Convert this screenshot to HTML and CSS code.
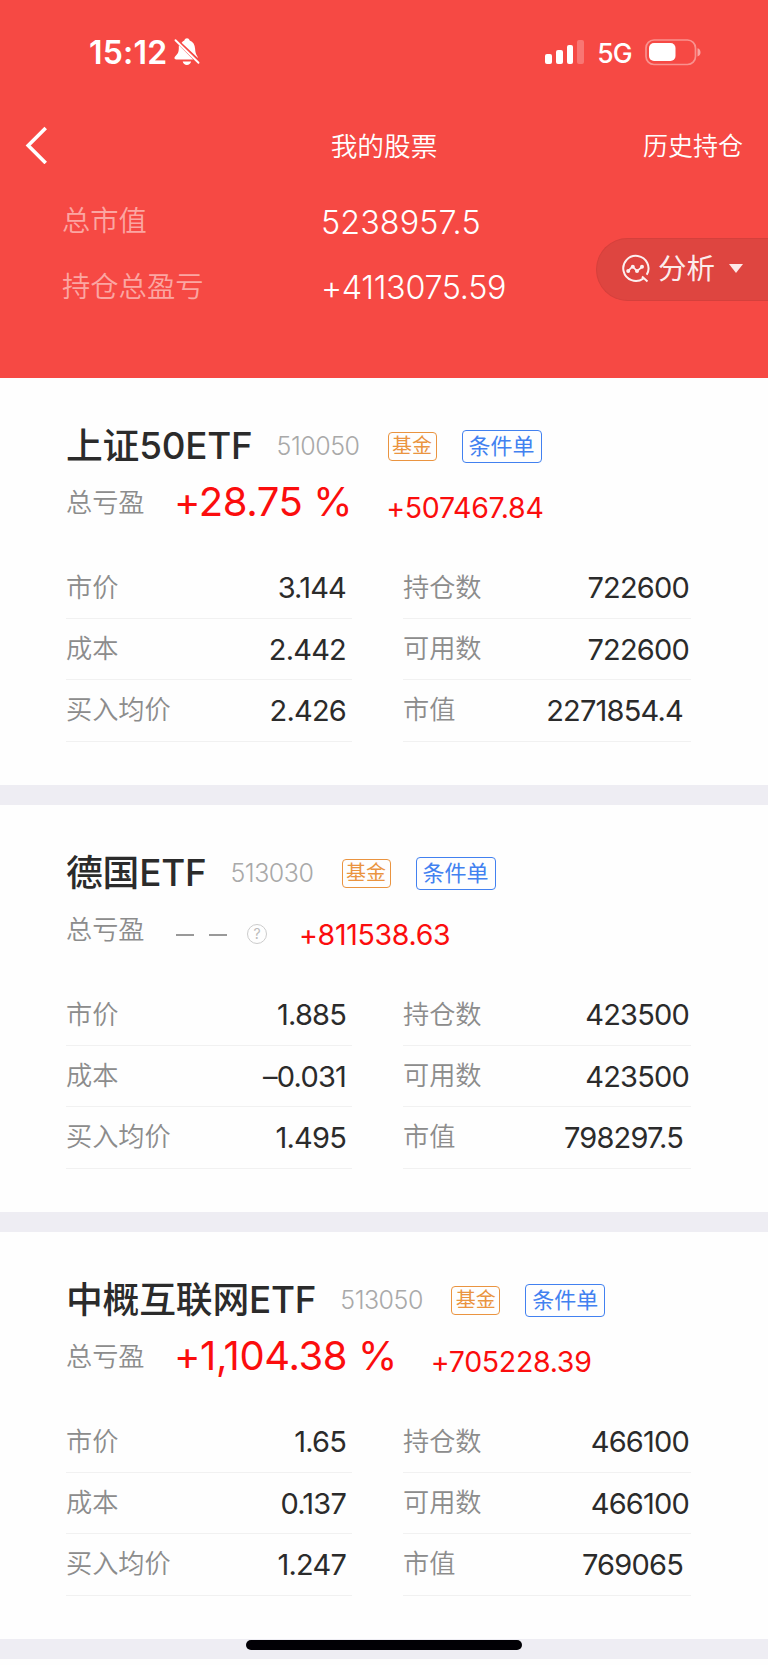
FILE: index.html
```html
<!doctype html>
<html lang="zh-CN">

<head>
    <meta charset="utf-8" />
    <meta name="viewport" content="width=device-width, initial-scale=1.0, viewport-fit=cover">
    <title>我的股票</title>
    <link rel="stylesheet" href="styles.css">
</head>

<body>

    <div class="main">

        <div class="header">
            <div class="status">
                <div class="time">15:12</div>
                <svg class="bell" width="26" height="28" viewBox="0 0 26 28">
                    <path fill="#fff" d="M7.600 4.800C8.600 3.700 9.400 3 10.300 2.600C10.800 1 11.800 .3 13 .3s2.200.7 2.700 2.300c3.400 1.300 5.200 4.200 5.400 8.200c.1 3.400.8 5.400 2.300 7.600c.3.500.5 1 .5 1.500L7.600 4.800zM4.900 7.200L19.200 21.500H2.200c-1.800 0-2.300-1.600-1.100-2.900c2.800-2.900 3.600-4.300 3.700-7.800c0-1.200 0-2.500.1-3.600zM8.700 23.500h8.400c-.5 2-2.200 3.500-4.200 3.500s-3.700-1.500-4.200-3.500z" />
                    <path stroke="#fff" stroke-width="1.900" stroke-linecap="round" d="M1.500 2.200L24.500 24.800" />
                </svg>
                <div class="signal"><i></i><i></i><i></i><i class="off"></i></div>
                <div class="network">5G</div>
                <svg class="battery" width="57" height="27" viewBox="0 0 57 27">
                    <rect x="1" y="1" width="49.500" height="24.500" rx="8" fill="none" stroke="#fff" stroke-opacity=".4" stroke-width="1.700" />
                    <rect x="4" y="4" width="26.500" height="18" rx="5" fill="#fff" />
                    <path fill="#fff" fill-opacity=".5" d="M52.500 9.200c4 1 4 7.200 0 8.200z" />
                </svg>
            </div>

            <div class="nav">
                <svg class="back" width="24" height="38" viewBox="0 0 24 38">
                    <path fill="none" stroke="#fff" stroke-width="3.600" d="M20.700 2L3.200 19.500L20.700 37" />
                </svg>
                <div class="title">我的股票</div>
                <div class="history">历史持仓</div>
            </div>

            <div class="summary">
                <div class="line"><span class="label">总市值</span><span class="value">5238957.5</span></div>
                <div class="line"><span class="label">持仓总盈亏</span><span class="value signed">+4113075.59</span></div>
            </div>

            <div class="analyze">
                <svg width="30" height="30" viewBox="0 0 30 30" fill="none" stroke="#fff" opacity=".92">
                    <path stroke-width="2" d="M22.200 24.600A12.600 12.600 0 1 1 25.700 20.800M21 22.500L26.500 27.500" />
                    <path stroke-width="1.700" d="M7 17.200L11.500 12.500L16 17.200L21.500 12.500" />
                    <g fill="#fff" stroke="none">
                        <circle cx="7.200" cy="17" r="2" />
                        <circle cx="11.800" cy="12.800" r="2" />
                        <circle cx="16" cy="17" r="2" />
                        <circle cx="21" cy="12.800" r="2" />
                    </g>
                </svg>
                <span class="text">分析</span>
                <span class="arrow"></span>
            </div>
        </div>

        <div class="stock">
            <div class="name">
                <span class="cn">上证50ETF</span>
                <span class="code">510050</span>
                <span class="tag fund">基金</span>
                <span class="tag order">条件单</span>
            </div>
            <div class="profit">
                <span class="label">总亏盈</span>
                <span class="percent">+28.75 %</span>
                <span class="amount">+507467.84</span>
            </div>
            <div class="grid">
                <div class="row"><span>市价</span><b>3.144</b></div>
                <div class="row"><span>持仓数</span><b>722600</b></div>
                <div class="row"><span>成本</span><b>2.442</b></div>
                <div class="row"><span>可用数</span><b>722600</b></div>
                <div class="row"><span>买入均价</span><b>2.426</b></div>
                <div class="row total"><span>市值</span><b>2271854.4</b></div>
            </div>
        </div>

        <div class="stock">
            <div class="name">
                <span class="cn">德国ETF</span>
                <span class="code">513030</span>
                <span class="tag fund">基金</span>
                <span class="tag order">条件单</span>
            </div>
            <div class="profit">
                <span class="label">总亏盈</span>
                <span class="empty"><i></i><i></i></span>
                <span class="help">?</span>
                <span class="amount">+811538.63</span>
            </div>
            <div class="grid">
                <div class="row"><span>市价</span><b>1.885</b></div>
                <div class="row"><span>持仓数</span><b>423500</b></div>
                <div class="row"><span>成本</span><b>–0.031</b></div>
                <div class="row"><span>可用数</span><b>423500</b></div>
                <div class="row"><span>买入均价</span><b>1.495</b></div>
                <div class="row total"><span>市值</span><b>798297.5</b></div>
            </div>
        </div>

        <div class="stock">
            <div class="name">
                <span class="cn">中概互联网ETF</span>
                <span class="code">513050</span>
                <span class="tag fund">基金</span>
                <span class="tag order">条件单</span>
            </div>
            <div class="profit">
                <span class="label">总亏盈</span>
                <span class="percent">+1,104.38 %</span>
                <span class="amount">+705228.39</span>
            </div>
            <div class="grid">
                <div class="row"><span>市价</span><b>1.65</b></div>
                <div class="row"><span>持仓数</span><b>466100</b></div>
                <div class="row"><span>成本</span><b>0.137</b></div>
                <div class="row"><span>可用数</span><b>466100</b></div>
                <div class="row"><span>买入均价</span><b>1.247</b></div>
                <div class="row total"><span>市值</span><b>769065</b></div>
            </div>
        </div>

        <div class="home-bar"></div>

    </div>

</body>

</html>
```
FILE: styles.css
```css
html,
body {
    margin: 0;
    height: 100%;
    font-family: Inter, "Noto Sans CJK SC", sans-serif;
    background-color: white;
}

.main {
    position: relative;
    height: 1665px;
    overflow: hidden;
    background-color: #fefefe;
}

.main .header {
    position: relative;
    box-sizing: border-box;
    height: 377.500px;
    padding-top: 30px;
    background-color: #f64944;
    color: white;
}

.main .header .status {
    display: flex;
    align-items: center;
    height: 44px;
    padding-left: 89px;
}

.main .header .status .time {
    width: 85px;
    padding-top: 2px;
    font-size: 32px;
    font-weight: 600;
    letter-spacing: 0.2px;
    line-height: 44px;
}

.main .header .status .signal {
    display: flex;
    align-items: flex-end;
    gap: 4px;
    height: 24px;
    margin-left: 345px;
}

.main .header .status .signal i {
    width: 6.800px;
    height: 10px;
    border-radius: 2px;
    background-color: white;
}

.main .header .status .signal i:nth-child(2) {
    height: 14px;
}

.main .header .status .signal i:nth-child(3) {
    height: 19px;
}

.main .header .status .signal i.off {
    height: 24px;
    opacity: 0.25;
}

.main .header .status .network {
    width: 48px;
    margin-left: 13px;
    font-size: 26.500px;
    font-weight: 500;
    letter-spacing: -0.8px;
    padding-top: 2px;
}

.main .header .nav {
    display: grid;
    grid-template-columns: 1fr auto 1fr;
    align-items: center;
    height: 44px;
    margin-top: 49px;
    padding: 0 25px;
    font-weight: 350;
}

.main .header .nav .title {
    margin-top: -2px;
    font-size: 26.700px;
}

.main .header .nav .history {
    margin-top: -2px;
    font-size: 25px;
    text-align: right;
}

.main .header .summary {
    margin-top: 21px;
    padding-left: 62px;
}

.main .header .summary .line {
    display: flex;
    align-items: center;
    height: 65.500px;
}

.main .header .summary .label {
    width: 259px;
    margin-top: -4px;
    font-size: 28.300px;
    font-weight: 350;
    color: #fba6a2;
}

.main .header .summary .value {
    font-size: 32.300px;
    font-weight: 350;
    letter-spacing: 0.1px;
    padding-top: 3px;
}

.main .header .summary .value.signed {
    letter-spacing: -0.300px;
}

/* pill stuck to the right edge, over the header */
.main .header .analyze {
    position: absolute;
    top: 238px;
    right: 0;
    display: flex;
    align-items: center;
    box-sizing: border-box;
    width: 172px;
    height: 62.500px;
    padding-left: 24px;
    border: 1px solid #d5403c;
    border-right: none;
    border-radius: 32px 0 0 32px;
    background-color: #de4540;
}

.main .header .analyze .text {
    margin-left: 7px;
    font-size: 28.500px;
    line-height: 60px;
    opacity: 0.9;
}

.main .header .analyze .arrow {
    margin-left: 14px;
    margin-top: -1px;
    border: 7px solid transparent;
    border-top: 9.500px solid #fde9e8;
    border-bottom: none;
}

.main .stock {
    box-sizing: border-box;
    height: 427px;
    padding: 44px 78px 0 66px;
    border-bottom: 20.500px solid #eeedf3;
}

.main .stock .name {
    display: flex;
    align-items: center;
    height: 48px;
}

.main .stock .name .cn {
    font-size: 36.800px;
    font-weight: 500;
    letter-spacing: -0.2px;
    line-height: 48px;
    color: #2b2b2b;
}

.main .stock .name .code {
    width: 85px;
    margin-left: 24px;
    font-size: 25px;
    font-weight: 300;
    letter-spacing: -0.5px;
    padding-top: 1px;
    color: #a9a9a9;
}

.main .stock .name .tag {
    box-sizing: border-box;
    margin-top: 1px;
    text-align: center;
    border: 1px solid;
    border-radius: 4px;
}

.main .stock .name .fund {
    width: 49px;
    height: 29px;
    margin-left: 26px;
    font-size: 20px;
    line-height: 27px;
    color: #ea9440;
}

.main .stock .name .order {
    width: 80px;
    height: 33px;
    margin-left: 25px;
    font-size: 22px;
    line-height: 30px;
    color: #4281f0;
}

.main .stock .profit {
    display: flex;
    align-items: center;
    height: 66px;
    line-height: 66px;
}

.main .stock .profit .label {
    width: 108px;
    font-size: 26.200px;
    font-weight: 350;
    color: #8c8c8c;
}

.main .stock .profit .percent {
    margin-top: -1px;
    margin-right: 34px;
    font-size: 40px;
    font-weight: 380;
    letter-spacing: -0.4px;
    color: #fb0d0d;
}

.main .stock .profit .amount {
    margin-top: 10px;
    font-size: 28.500px;
    font-weight: 380;
    letter-spacing: -0.3px;
    color: #fb0d0d;
}

.main .stock .profit .empty {
    display: flex;
    gap: 15px;
    margin-top: 10px;
    margin-left: 2px;
}

.main .stock .profit .empty i {
    width: 18px;
    height: 2px;
    background-color: #999;
}

.main .stock .profit .help {
    box-sizing: border-box;
    width: 20px;
    height: 20px;
    margin: 9px 32px 0 20px;
    border: 1px solid #ccc;
    border-radius: 50%;
    font-size: 14px;
    line-height: 18px;
    text-align: center;
    color: #bbb;
}

.main .stock .grid {
    display: grid;
    grid-template-columns: 286px 288px;
    grid-auto-rows: 61.400px;
    justify-content: space-between;
    margin-top: 22px;
    margin-right: -1px;
}

.main .stock .grid .row {
    display: flex;
    justify-content: space-between;
    align-items: center;
    box-sizing: border-box;
    padding-right: 6px;
    border-bottom: 1px solid #f1f1f1;
}

.main .stock .grid .row:nth-child(even) {
    padding-right: 2px;
}

.main .stock .grid .row.total {
    padding-right: 8px;
}

.main .stock .grid .row span {
    margin-top: -4px;
    font-size: 26.200px;
    font-weight: 350;
    color: #8c8c8c;
}

.main .stock .grid .row b {
    font-size: 29px;
    font-weight: 380;
    letter-spacing: -0.8px;
    color: #2b2b2b;
}

/* iOS home indicator */
.main .home-bar {
    position: absolute;
    left: 246px;
    bottom: 15px;
    width: 276px;
    height: 10px;
    border-radius: 5px;
    background-color: #010005;
}
```
